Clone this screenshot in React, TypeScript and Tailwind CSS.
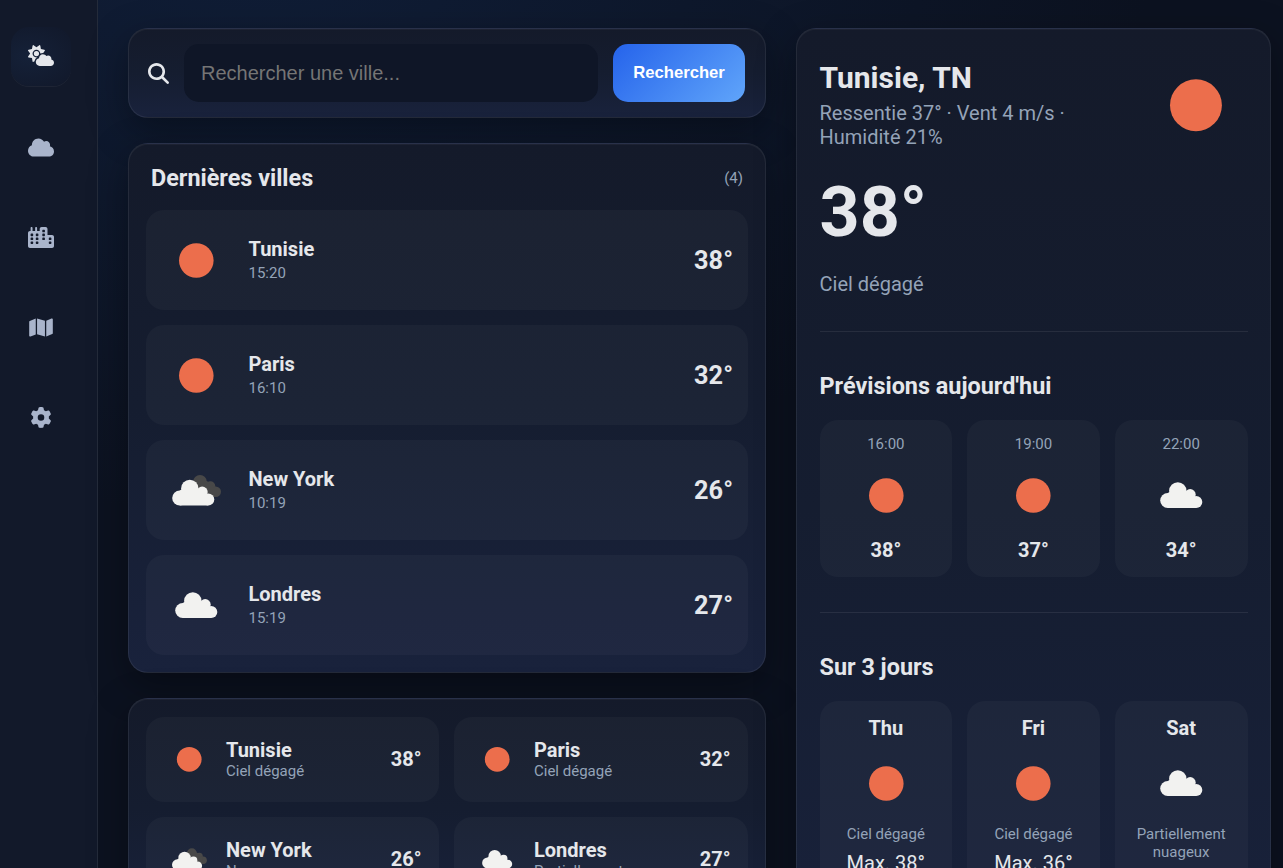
import { FaCloudSun, FaCloud, FaCity, FaMap, FaGear, FaMagnifyingGlass } from "react-icons/fa6";

type Sky = "sun" | "cloud" | "clouds";

const cities: { name: string; time: string; temp: string; desc: string; sky: Sky }[] = [
  { name: "Tunisie", time: "15:20", temp: "38°", desc: "Ciel dégagé", sky: "sun" },
  { name: "Paris", time: "16:10", temp: "32°", desc: "Ciel dégagé", sky: "sun" },
  { name: "New York", time: "10:19", temp: "26°", desc: "Nuageux", sky: "clouds" },
  { name: "Londres", time: "15:19", temp: "27°", desc: "Partiellement nuageux", sky: "cloud" },
];

const hours: { time: string; temp: string; sky: Sky }[] = [
  { time: "16:00", temp: "38°", sky: "sun" },
  { time: "19:00", temp: "37°", sky: "sun" },
  { time: "22:00", temp: "34°", sky: "cloud" },
];

const days: { day: string; desc: string; max: string; min: string; sky: Sky }[] = [
  { day: "Thu", desc: "Ciel dégagé", max: "Max. 38°", min: "Min. 25°", sky: "sun" },
  { day: "Fri", desc: "Ciel dégagé", max: "Max. 36°", min: "Min. 24°", sky: "sun" },
  { day: "Sat", desc: "Partiellement nuageux", max: "Max. 34°", min: "Min. 24°", sky: "cloud" },
];

const nav = [FaCloudSun, FaCloud, FaCity, FaMap, FaGear];

const card =
  "shrink-0 rounded-[20px] border border-white/[0.07] bg-linear-to-b from-[#141a2a] via-[#151d30] to-[#19223c] shadow-[0_12px_38px_rgba(0,0,0,0.35),inset_0_1px_0_rgba(255,255,255,0.04)]";
const tile = "rounded-[18px] bg-white/[0.03]";

function CloudShape() {
  return (
    <g fill="#f2f2f0">
      <circle cx="21.8" cy="40.5" r="7.6" />
      <circle cx="31.8" cy="31" r="8.7" />
      <circle cx="44.2" cy="34.6" r="5.5" />
      <circle cx="50.2" cy="42" r="6.1" />
      <path d="M21.8 33 32 27l12 7 6.2 4v10.1H21.8z" />
    </g>
  );
}

function WeatherIcon({ sky, className }: { sky: Sky; className: string }) {
  return (
    <svg viewBox="0 0 70 70" className={`block shrink-0 ${className}`}>
      {sky === "sun" && <circle cx="35.3" cy="35.5" r="17.3" fill="#ec6e4c" />}
      {sky === "cloud" && <CloudShape />}
      {sky === "clouds" && (
        <>
          <g fill="#484848">
            <circle cx="39" cy="27" r="6.9" />
            <circle cx="49.4" cy="31.2" r="4.9" />
            <circle cx="54.7" cy="36.8" r="5.3" />
            <path d="M38 26h8l8 7 0 9H42z" />
          </g>
          <g transform="translate(-3 2.5)">
            <CloudShape />
          </g>
        </>
      )}
    </svg>
  );
}

function Sidebar() {
  return (
    <nav className="flex w-[98px] shrink-0 flex-col gap-[30px] border-r border-white/[0.08] bg-[#12192a] pt-[27px] pl-[11px]">
      {nav.map((Icon, i) => (
        <button
          key={i}
          className={
            i === 0
              ? "mb-px flex h-[59px] w-[60px] items-center justify-center rounded-[18px] bg-radial-[at_30%_50%] from-[#152138] to-[#11182a] pb-0.5 text-[#e5e7eb] shadow-[0_1px_0_rgba(255,255,255,0.05)]"
              : "flex size-[60px] items-center justify-center text-[#a9b4cb]"
          }
        >
          <Icon className="h-[21px] w-[26px]" />
        </button>
      ))}
    </nav>
  );
}

function SearchBar() {
  return (
    <div className={`${card} flex h-[90px] items-center gap-[15px] px-[19px] pr-5`}>
      <FaMagnifyingGlass className="size-[21px] shrink-0" />
      <input
        placeholder="Rechercher une ville..."
        className="h-[58px] min-w-0 flex-1 rounded-[15px] bg-[#0f1627] px-[17px] font-['Liberation_Sans',sans-serif] text-[20px] outline-none placeholder:text-[#757575]"
      />
      <button className="h-[58px] w-[132px] shrink-0 rounded-[15px] bg-linear-[135deg,#2563eb,#60a5fa] pb-px font-['Liberation_Sans',sans-serif] text-[16.67px] font-bold text-white">
        Rechercher
      </button>
    </div>
  );
}

function RecentCities() {
  return (
    <section className={`${card} h-[530px] px-[17px] pt-5`}>
      <header className="flex h-7 items-center justify-between px-[5px]">
        <h2 className="text-[23.4px] leading-7 font-bold">Dernières villes</h2>
        <span className="text-[15px] leading-[18px] text-[#94a3b8]">(4)</span>
      </header>
      <div className="mt-[18px] flex flex-col gap-[15px]">
        {cities.map((c) => (
          <div key={c.name} className={`${tile} flex h-[100px] items-center px-[15px]`}>
            <WeatherIcon sky={c.sky} className="size-[70px]" />
            <div className="ml-[17.5px] flex-1 pb-0.5">
              <div className="text-[20px] leading-6 font-bold">{c.name}</div>
              <div className="mt-[3px] text-[15px] leading-[18px] text-[#94a3b8]">{c.time}</div>
            </div>
            <div className="pt-0.5 text-[25.3px] leading-[30px] font-bold">{c.temp}</div>
          </div>
        ))}
      </div>
    </section>
  );
}

function CityGrid() {
  return (
    <section className={`${card} grid h-[222px] grid-cols-[293px_1fr] content-start gap-[15px] px-[17px] py-[17.5px]`}>
      {cities.map((c) => (
        <div key={c.name} className={`${tile} flex h-[85px] items-center px-[17.5px]`}>
          <WeatherIcon sky={c.sky} className="size-[50px]" />
          <div className="ml-[12.5px] min-w-0 flex-1">
            <div className="text-[20px] leading-6 font-bold">{c.name}</div>
            <div className="truncate text-[15px] leading-[18px] text-[#94a3b8]">{c.desc}</div>
          </div>
          <div className="text-[20px] leading-6 font-bold">{c.temp}</div>
        </div>
      ))}
    </section>
  );
}

function Details() {
  return (
    <aside className={`${card} h-[964px] w-[475px] px-[22.5px] pt-[22.5px]`}>
      <header className="flex h-[105px] items-center justify-between">
        <div className="w-[280px]">
          <h1 className="text-[30px] leading-9 font-bold">Tunisie, TN</h1>
          <p className="mt-[5px] text-[20px] leading-6 text-[#94a3b8]">
            Ressentie 37° · Vent 4 m/s · Humidité 21%
          </p>
        </div>
        <WeatherIcon sky="sun" className="size-[105px]" />
      </header>
      <div className="mt-[13px] text-[70px] leading-[84px] font-bold">38°</div>
      <p className="mt-[18px] text-[20px] leading-6 text-[#94a3b8]">Ciel dégagé</p>
      <hr className="mt-[35px] border-white/[0.08]" />
      <h2 className="mt-[40.5px] text-[23.4px] leading-7 font-bold">Prévisions aujourd'hui</h2>
      <div className="mt-5 grid grid-cols-3 gap-[15px]">
        {hours.map((h) => (
          <div key={h.time} className={`${tile} flex flex-col items-center gap-[7.5px] py-[15px]`}>
            <span className="text-[15px] leading-[18px] text-[#94a3b8]">{h.time}</span>
            <WeatherIcon sky={h.sky} className="-mt-px mb-px size-[70px]" />
            <span className="text-[20px] leading-6 font-bold">{h.temp}</span>
          </div>
        ))}
      </div>
      <hr className="mt-[35px] border-white/[0.08]" />
      <h2 className="mt-10 text-[23.4px] leading-7 font-bold">Sur 3 jours</h2>
      <div className="mt-5 grid grid-cols-3 gap-[15px]">
        {days.map((d) => (
          <div key={d.day} className={`${tile} flex flex-col items-center gap-[7.5px] px-[15px] py-[15px] text-center`}>
            <span className="text-[20px] leading-6 font-bold">{d.day}</span>
            <WeatherIcon sky={d.sky} className="size-[70px]" />
            <span className="text-[15px] leading-[18px] text-[#94a3b8]">{d.desc}</span>
            <span className="text-[20px] leading-6">
              {d.max}
              <br />
              {d.min}
            </span>
          </div>
        ))}
      </div>
    </aside>
  );
}

export default function App() {
  return (
    <div className="flex h-[868px] w-full overflow-hidden bg-[#0c1220] bg-[radial-gradient(1500px_1000px_at_20%_-10%,#101e38_0%,#0c1220_60%)] font-[Roboto,sans-serif] text-[#e5e7eb]">
      <Sidebar />
      <main className="flex min-w-0 flex-1 items-start gap-[30px] pt-7 pr-3 pl-[30px]">
        <div className="flex min-w-0 flex-1 flex-col gap-[25px]">
          <SearchBar />
          <RecentCities />
          <CityGrid />
        </div>
        <Details />
      </main>
    </div>
  );
}
